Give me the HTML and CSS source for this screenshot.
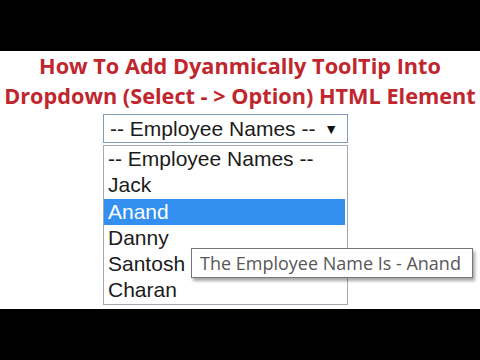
FILE: index.html
```html
<!DOCTYPE html>
<html>
<head>
<meta charset="utf-8">
<link rel="stylesheet" href="styles.css">
</head>
<body>
<div class="frame">
  <div class="stage">
    <h1 class="title">How To Add Dyanmically ToolTip Into<br>Dropdown (Select - &gt; Option) HTML Element</h1>
    <div class="picker">
      <div class="select">
        <span>-- Employee Names --</span>
        <span class="arrow">&#9660;</span>
      </div>
      <ul class="list">
        <li>-- Employee Names --</li>
        <li>Jack</li>
        <li class="active">Anand</li>
        <li>Danny</li>
        <li>Santosh</li>
        <li>Charan</li>
      </ul>
    </div>
    <div class="tooltip">The Employee Name Is - Anand</div>
  </div>
</div>
</body>
</html>
```
FILE: styles.css
```css
html, body {
  margin: 0;
  padding: 0;
  background: #000;
}
.frame {
  width: 480px;
  height: 360px;
  padding: 51px 0;
  box-sizing: border-box;
  background: #000;
}
.stage {
  position: relative;
  height: 258px;
  background: #fff;
  overflow: hidden;
}
.title {
  margin: 0;
  padding-top: 0;
  font-family: "Open Sans", "Liberation Sans", sans-serif;
  font-weight: 700;
  font-size: 21.7px;
  line-height: 30px;
  color: #c0262d;
  text-align: center;
  letter-spacing: 0;
}
.picker {
  margin: 3px 0 0 103px;
  width: 245px;
  font-family: "Liberation Sans", Arial, sans-serif;
  font-size: 21px;
  color: #1b1b1b;
}
.select {
  box-sizing: border-box;
  height: 29px;
  border: 1px solid #7f9db9;
  display: flex;
  align-items: center;
  justify-content: space-between;
  padding: 0 9px 0 6px;
}
.arrow {
  font-size: 14px;
  color: #111;
}
.list {
  list-style: none;
  margin: 2px 0 0;
  padding: 0;
  border: 1px solid #a3a9b3;
  box-sizing: border-box;
  width: 245px;
}
.list li {
  height: 26.3px;
  line-height: 26px;
  padding: 0 4px;
  margin-right: 2px;
}
.list li.active {
  background: #3390f0;
  color: #fff;
}
.tooltip {
  position: absolute;
  left: 191px;
  top: 197px;
  width: 282px;
  height: 30px;
  box-sizing: border-box;
  border: 1px solid #767676;
  background: #fff;
  box-shadow: 2px 3px 3px rgba(0,0,0,0.35);
  font-family: "Open Sans", "Noto Sans", sans-serif;
  font-size: 18px;
  line-height: 28px;
  color: #575757;
  padding-left: 8px;
  white-space: nowrap;
}
```
